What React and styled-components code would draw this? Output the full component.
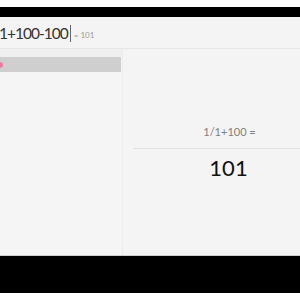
import React from "react";
import styled, { createGlobalStyle } from "styled-components";

const GlobalStyle = createGlobalStyle`
  html, body {
    margin: 0;
    padding: 0;
    background: #ffffff;
    overflow: hidden;
  }
  body {
    font-family: Lato, "Open Sans", "Liberation Sans", sans-serif;
  }
`;

const Screen = styled.div`
  margin-top: 7px;
  width: 300px;
  background: #000000;
  padding: 10px 0 37px;
  overflow: hidden;
`;

const Panel = styled.div`
  width: 324px;
  height: 239px;
  background: #f4f4f4;
  border-bottom: 1px solid #cfcfcf;
  box-sizing: border-box;
  display: flex;
  flex-direction: column;
`;

const InputBar = styled.div`
  height: 32px;
  flex: none;
  display: flex;
  align-items: center;
  border-bottom: 1px solid #e6e6e6;
  box-sizing: border-box;
  padding-top: 1px;
`;

const Expression = styled.span`
  font-size: 15.5px;
  color: #333;
  letter-spacing: -1px;
  margin-left: -1px;
`;

const Caret = styled.span`
  display: inline-block;
  width: 1px;
  height: 17px;
  background: #666;
  margin: 0 3px 0 2px;
`;

const Preview = styled.span`
  font-size: 8px;
  color: #9a9a9a;
  padding-top: 3px;
`;

const Body = styled.div`
  flex: 1;
  display: grid;
  grid-template-columns: 122px 1px 1fr;
`;

const History = styled.div`
  display: flex;
  flex-direction: column;
  background: #f5f5f5;
`;

const HistoryHead = styled.div`
  height: 8px;
  background: #efefef;
`;

const HistoryRow = styled.div`
  position: relative;
  height: 15px;
  background: ${(p) => (p.$active ? "#cfcfcf" : "transparent")};
  margin-right: 1px;
`;

const Dot = styled.span`
  position: absolute;
  left: -3px;
  top: 5px;
  width: 6px;
  height: 6px;
  border-radius: 50%;
  background: #f07aa8;
`;

const Divider = styled.div`
  background: #ececec;
`;

const Result = styled.div`
  display: flex;
  flex-direction: column;
  align-items: stretch;
  padding: 76px 0 0 10px;
`;

const Question = styled.div`
  font-size: 11px;
  color: #808080;
  text-align: center;
  height: 23px;
  border-bottom: 1px solid #e2e2e2;
  padding-left: 2px;
`;

const Answer = styled.div`
  font-size: 22px;
  color: #111;
  text-align: center;
  padding-top: 5px;
`;

export default function App() {
  return (
    <>
      <GlobalStyle />
      <Screen>
        <Panel>
          <InputBar>
            <Expression>1+100-100</Expression>
            <Caret />
            <Preview>= 101</Preview>
          </InputBar>
          <Body>
            <History>
              <HistoryHead />
              <HistoryRow $active>
                <Dot />
              </HistoryRow>
            </History>
            <Divider />
            <Result>
              <Question>1/1+100 =</Question>
              <Answer>101</Answer>
            </Result>
          </Body>
        </Panel>
      </Screen>
    </>
  );
}
